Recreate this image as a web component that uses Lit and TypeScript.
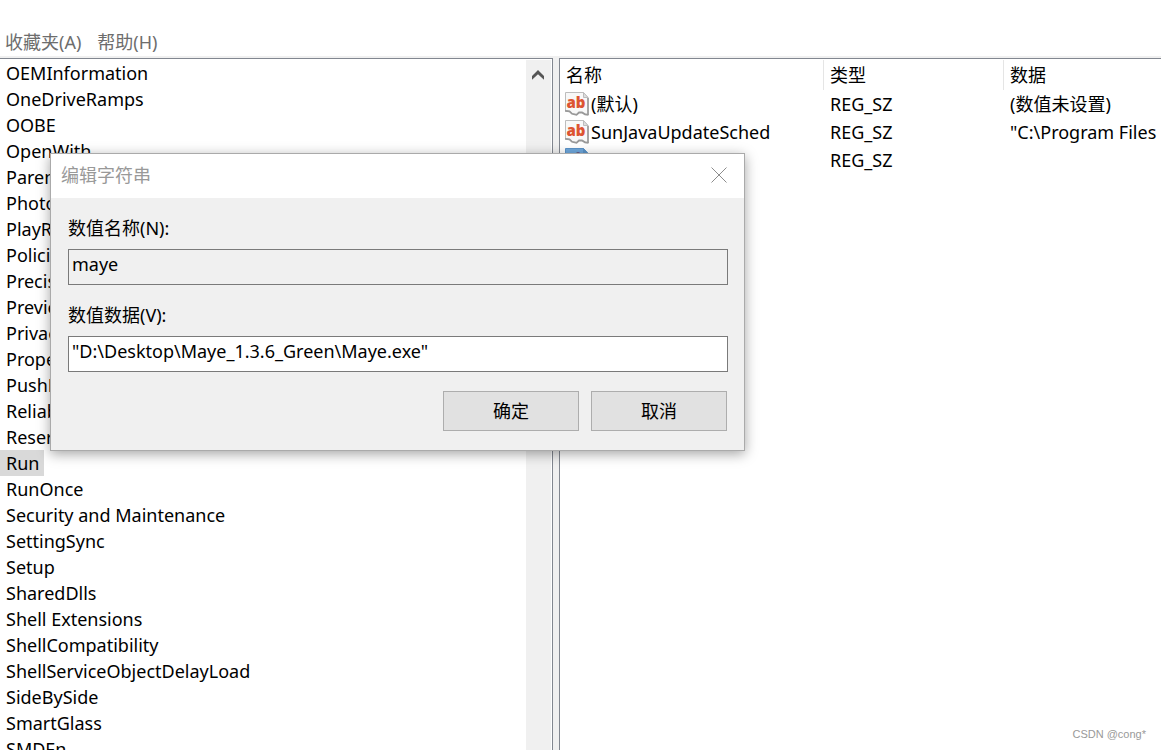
import { LitElement, html, css, svg } from "lit";
import { customElement, property, state } from "lit/decorators.js";
import { classMap } from "lit/directives/class-map.js";

const KEYS = [
  "OEMInformation",
  "OneDriveRamps",
  "OOBE",
  "OpenWith",
  "Parental Controls",
  "PhotoPropertyHandler",
  "PlayReady",
  "Policies",
  "PrecisionTouchPad",
  "PreviewHandlers",
  "Privacy",
  "PropertySystem",
  "PushNotifications",
  "Reliability",
  "ReserveManager",
  "Run",
  "RunOnce",
  "Security and Maintenance",
  "SettingSync",
  "Setup",
  "SharedDlls",
  "Shell Extensions",
  "ShellCompatibility",
  "ShellServiceObjectDelayLoad",
  "SideBySide",
  "SmartGlass",
  "SMDEn",
];

interface RegValue {
  name: string;
  type: string;
  data: string;
  selected?: boolean;
}

const VALUES: RegValue[] = [
  { name: "(默认)", type: "REG_SZ", data: "(数值未设置)" },
  { name: "SunJavaUpdateSched", type: "REG_SZ", data: '"C:\\Program Files' },
  { name: "maye", type: "REG_SZ", data: "", selected: true },
];

@customElement("string-icon")
class StringIcon extends LitElement {
  @property({ type: Boolean }) selected = false;

  static styles = css`
    :host {
      display: block;
      flex: none;
      width: 24px;
      height: 24px;
    }
    svg {
      display: block;
    }
    .ab {
      font: 800 15px "Open Sans", "Noto Sans", sans-serif;
    }
  `;

  render() {
    const paper = this.selected ? "#6fa8dc" : "#f8f8f8";
    const edge = this.selected ? "#5b93c8" : "#bdbdbd";
    const shade = this.selected ? "#5b93c8" : "#999";
    const ink = this.selected ? "#6a5f8e" : "#dd5432";
    return html`<svg width="24" height="24" viewBox="0 0 24 24" aria-hidden="true">
      ${svg`
        <path d="M.5 .5H18.5L23 5.5V22.5L20 22L17 20.5L14 20.5L12 22.5L8 22L5 19.5L.5 18.5Z"
          fill=${paper} stroke=${edge}></path>
        <path d="M0 18.8L4.5 19.3L7 21.8L11.5 22.8L14 20.5L17 20.5L20 22.3L23.5 22.8"
          fill="none" stroke=${shade} stroke-width="1.8"></path>
        <path d="M23 6V23" stroke=${shade} stroke-width="1.6"></path>
        <path d="M18.5 .5V5.5H23Z" fill=${this.selected ? "#5b93c8" : "#dedede"} stroke=${edge}></path>
        <text class="ab" x="11" y="16" text-anchor="middle" fill=${ink}>ab</text>
      `}
    </svg>`;
  }
}

@customElement("key-tree")
class KeyTree extends LitElement {
  @state() private current = "Run";

  static styles = css`
    :host {
      display: flex;
      min-width: 0;
      min-height: 0;
      overflow: hidden;
      background: #fff;
      border: solid #828790;
      border-width: 1px 1px 0 0;
      padding: 1px 1px 0 0;
      box-sizing: border-box;
    }
    .list {
      flex: 1;
      min-width: 0;
      margin: 0;
      padding: 0;
      list-style: none;
    }
    .key {
      display: block;
      border: 0;
      margin: 0;
      padding: 0 5px 0 6px;
      background: none;
      color: #000;
      font: inherit;
      line-height: 26px;
      white-space: nowrap;
    }
    .key.current {
      background: #d9d9d9;
    }
    .scroll {
      flex: none;
      width: 25px;
      background: #f0f0f0;
    }
    .up {
      display: flex;
      align-items: center;
      justify-content: center;
      width: 100%;
      height: 30px;
      border: 0;
      padding: 0 1px 0 0;
      background: none;
    }
  `;

  render() {
    return html`
      <ul class="list">
        ${KEYS.map(
          (k) => html`<li>
            <button
              class=${classMap({ key: true, current: k === this.current })}
              @click=${() => (this.current = k)}
            >${k}</button>
          </li>`
        )}
      </ul>
      <div class="scroll">
        <button class="up" aria-label="向上滚动">
          <svg width="12" height="10" viewBox="0 0 12 10" aria-hidden="true">
            <path d="M0 6L6 0L12 6V9.8L6 4.2L0 9.8Z" fill="#555"></path>
          </svg>
        </button>
      </div>
    `;
  }
}

@customElement("value-list")
class ValueList extends LitElement {
  static styles = css`
    :host {
      display: block;
      min-width: 0;
      min-height: 0;
      overflow: hidden;
      background: #fff;
      border: solid #828790;
      border-width: 1px 0 0 1px;
      padding-top: 1px;
      box-sizing: border-box;
    }
    .grid {
      width: 100%;
      table-layout: fixed;
      border-collapse: separate;
      border-spacing: 0;
    }
    .name {
      width: 264px;
    }
    .type {
      width: 180px;
    }
    th,
    td {
      box-sizing: border-box;
      padding: 0 0 0 6px;
      text-align: left;
      font-weight: normal;
      white-space: nowrap;
      overflow: hidden;
    }
    th {
      height: 30px;
      line-height: 30px;
      border-right: 1px solid #e5e5e5;
    }
    th:last-child {
      border-right: 0;
    }
    td {
      height: 28px;
      line-height: 28px;
    }
    td:first-child {
      padding-left: 5px;
    }
    .cell {
      display: flex;
      align-items: center;
      gap: 2px;
    }
  `;

  render() {
    return html`<table class="grid">
      <thead>
        <tr>
          <th class="name">名称</th>
          <th class="type">类型</th>
          <th>数据</th>
        </tr>
      </thead>
      <tbody>
        ${VALUES.map(
          (v) => html`<tr>
            <td>
              <div class="cell">
                <string-icon ?selected=${v.selected}></string-icon>
                <span>${v.name}</span>
              </div>
            </td>
            <td>${v.type}</td>
            <td>${v.data}</td>
          </tr>`
        )}
      </tbody>
    </table>`;
  }
}

@customElement("edit-string-dialog")
class EditStringDialog extends LitElement {
  static styles = css`
    :host {
      display: block;
      box-sizing: border-box;
      border: 1px solid #aaa;
      background: #f0f0f0;
      box-shadow: 0 3px 12px rgba(0, 0, 0, 0.36);
    }
    .title {
      display: flex;
      align-items: center;
      justify-content: space-between;
      box-sizing: border-box;
      height: 44px;
      padding: 0 17px 2px 10px;
      background: #fff;
      color: #999;
    }
    .heading {
      margin: 0;
      font: inherit;
    }
    .close {
      display: flex;
      border: 0;
      padding: 0;
      background: none;
    }
    .body {
      padding: 16px 16px 19px 17px;
    }
    .label {
      display: block;
      line-height: 28px;
      margin-bottom: 7px;
    }
    .field {
      display: block;
      box-sizing: border-box;
      width: 100%;
      height: 36px;
      margin: 0 0 16px;
      padding: 0 3px 6px;
      border: 1px solid #7a7a7a;
      border-radius: 0;
      background: #fff;
      color: #000;
      font: inherit;
      outline: none;
    }
    .field:read-only {
      background: #f0f0f0;
    }
    .actions {
      display: flex;
      justify-content: flex-end;
      gap: 12px;
      padding: 3px 1px 0 0;
    }
    .action {
      width: 136px;
      height: 40px;
      border: 1px solid #adadad;
      border-radius: 0;
      padding: 0;
      background: #e1e1e1;
      color: #000;
      font: inherit;
    }
  `;

  render() {
    return html`
      <div class="title">
        <h2 class="heading">编辑字符串</h2>
        <button class="close" aria-label="关闭">
          <svg width="16" height="16" viewBox="0 0 16 16" aria-hidden="true">
            <path d="M.5 .5L15.5 15.5M15.5 .5L.5 15.5" stroke="#8c8c8c" fill="none"></path>
          </svg>
        </button>
      </div>
      <form class="body" @submit=${(e: Event) => e.preventDefault()}>
        <label class="label" for="value-name">数值名称(N):</label>
        <input class="field" id="value-name" type="text" readonly .value=${"maye"} />
        <label class="label" for="value-data">数值数据(V):</label>
        <input
          class="field"
          id="value-data"
          type="text"
          spellcheck="false"
          .value=${'"D:\\Desktop\\Maye_1.3.6_Green\\Maye.exe"'}
        />
        <div class="actions">
          <button class="action" type="submit">确定</button>
          <button class="action" type="button">取消</button>
        </div>
      </form>
    `;
  }
}

@customElement("app-root")
class AppRoot extends LitElement {
  static styles = css`
    :host {
      position: relative;
      display: flex;
      flex-direction: column;
      height: 100vh;
      overflow: hidden;
      background: #fff;
      color: #000;
      font: 18px/26px "Noto Sans", "Noto Sans CJK SC", sans-serif;
    }
    .menu {
      display: flex;
      flex: none;
      gap: 16px;
      padding: 29px 5px 1px;
    }
    .item {
      border: 0;
      padding: 0;
      background: none;
      color: #6d6d6d;
      font: inherit;
    }
    .panes {
      flex: 1;
      min-height: 0;
      display: grid;
      grid-template-columns: minmax(0, 553fr) minmax(0, 602fr);
      grid-template-rows: minmax(0, 1fr);
      gap: 6px;
      padding-top: 2px;
      background: #f0f0f0;
    }
    .dialog {
      position: absolute;
      left: 50px;
      top: 153px;
      width: 695px;
    }
    .mark {
      position: absolute;
      right: 15px;
      bottom: 8px;
      color: #999;
      font: 11px/16px "Liberation Sans", sans-serif;
    }
  `;

  render() {
    return html`
      <nav class="menu">
        <button class="item">收藏夹(A)</button>
        <button class="item">帮助(H)</button>
      </nav>
      <main class="panes">
        <key-tree></key-tree>
        <value-list></value-list>
      </main>
      <edit-string-dialog class="dialog" role="dialog" aria-label="编辑字符串"></edit-string-dialog>
      <span class="mark">CSDN @cong*</span>
    `;
  }
}
